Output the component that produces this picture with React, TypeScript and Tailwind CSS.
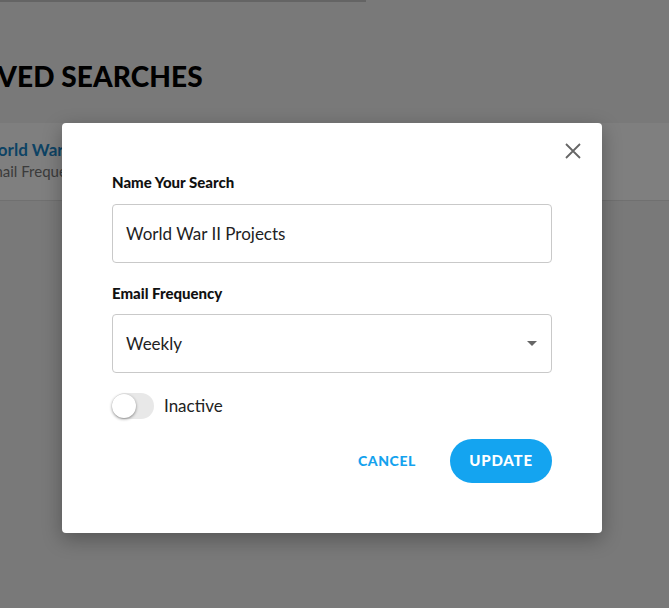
import React from "react";

export default function App() {
  return (
    <div className="relative h-[608px] w-[669px] overflow-hidden bg-[#f3f3f3]" style={{ fontFamily: "Lato, 'Noto Sans', sans-serif" }}>
      {/* underlying page */}
      <div className="h-[2px] w-[366px] bg-[#c8c8c8]" />
      <div className="-ml-[36px] pt-[56px]">
        <h1 className="text-[28px] font-black leading-[36px] tracking-[0.1px] text-black">SAVED SEARCHES</h1>
      </div>
      <div className="mt-[29px] flex h-[78px] flex-col justify-center border-b border-[#e0e0e0] bg-white pb-[4px]">
        <div className="-ml-[19px] text-[17px] font-bold leading-[22px] text-[#1b86c9]">World War II Projects</div>
        <div className="-ml-[18px] text-[15px] leading-[20px] text-[#777]">Email Frequency: Weekly</div>
      </div>

      {/* overlay */}
      <div className="absolute inset-0 bg-black/50" />

      {/* modal */}
      <div className="absolute left-[62px] top-[123px] w-[540px] rounded-[4px] bg-white px-[50px] pb-[50px] pt-[49px] shadow-[0_6px_20px_rgba(0,0,0,0.3)]">
        <button className="absolute right-[20px] top-[19px] text-[#666]" aria-label="close">
          <svg width="18" height="18" viewBox="0 0 18 18" fill="none" stroke="currentColor" strokeWidth="1.8">
            <path d="M2 2L16 16M16 2L2 16" />
          </svg>
        </button>
        <label className="block text-[15px] font-black leading-[20px] text-[#111]">Name Your Search</label>
        <div className="mt-[12px] flex h-[59px] items-center rounded-[4px] border border-[#c9c9c9] px-[13px] text-[17px] text-[#222]">
          World War II Projects
        </div>
        <label className="mt-[20px] block text-[15px] font-black leading-[20px] text-[#111]">Email Frequency</label>
        <div className="mt-[11px] flex h-[59px] items-center justify-between rounded-[4px] border border-[#c9c9c9] pl-[13px] pr-[14px] text-[17px] text-[#222]">
          <span>Weekly</span>
          <svg width="10" height="5" viewBox="0 0 10 5"><path d="M0 0H10L5 5Z" fill="#666" /></svg>
        </div>
        <div className="mt-[20px] flex items-center gap-[10px]">
          <div className="relative h-[26px] w-[42px] rounded-full bg-[#e8e8e8]">
            <div className="absolute left-0 top-[1px] h-[24px] w-[24px] rounded-full bg-white shadow-[0_1px_3px_rgba(0,0,0,0.45)]" />
          </div>
          <span className="text-[17px] text-[#222]">Inactive</span>
        </div>
        <div className="mt-[20px] flex items-center justify-end gap-[34px]">
          <button className="pb-[2px] text-[14px] font-black tracking-[0.6px] text-[#14a2ee]">CANCEL</button>
          <button className="h-[44px] w-[102px] rounded-full bg-[#14a4f0] pb-[2px] text-[15px] font-black tracking-[0.8px] text-white">UPDATE</button>
        </div>
      </div>
    </div>
  );
}
